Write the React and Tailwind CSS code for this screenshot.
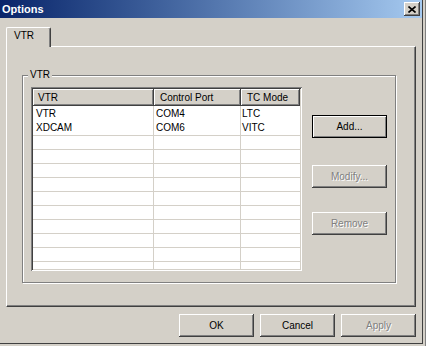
import clsx from "clsx";

const bevel =
  "shadow-[inset_-1px_-1px_#404040,inset_1px_1px_#ffffff,inset_-2px_-2px_#808080,inset_2px_2px_#d4d0c8]";

function Button({ children, disabled, isDefault }) {
  return (
    <div
      className={clsx(
        "flex h-[23px] w-[75px] shrink-0 items-center justify-center bg-[#d4d0c8]",
        isDefault
          ? "border border-black shadow-[inset_1px_1px_#ffffff,inset_-1px_-1px_#808080]"
          : bevel,
        disabled ? "text-[#808080] [text-shadow:1px_1px_0_#ffffff]" : "text-black"
      )}
    >
      {children}
    </div>
  );
}

const rows = [
  { vtr: "VTR", port: "COM4", mode: "LTC" },
  { vtr: "XDCAM", port: "COM6", mode: "VITC" },
];

function VtrList() {
  return (
    <div className="flex h-[184px] w-[271px] shrink-0 flex-col overflow-hidden bg-white p-[2px] shadow-[inset_1px_1px_#808080,inset_-1px_-1px_#ffffff,inset_2px_2px_#404040,inset_-2px_-2px_#d4d0c8]">
      <div className="flex h-[17px] shrink-0 leading-[17px]">
        <div className={clsx("w-[121px] shrink-0 bg-[#d4d0c8] pl-[5px]", bevel)}>VTR</div>
        <div className={clsx("w-[87px] shrink-0 bg-[#d4d0c8] pl-[6px]", bevel)}>Control Port</div>
        <div className={clsx("flex-1 bg-[#d4d0c8] pl-[6px]", bevel)}>TC Mode</div>
      </div>
      <div className="flex min-h-0 flex-1 flex-col overflow-hidden">
        {rows.map((r, i) => (
          <div
            key={r.vtr}
            className={clsx("flex shrink-0", i === 0 ? "h-[15px] leading-[15px]" : "h-[14px] leading-[14px]")}
          >
            <div className="w-[121px] shrink-0 border-r border-[#d4d0c8] pl-[3px]">{r.vtr}</div>
            <div className="w-[87px] shrink-0 border-r border-[#d4d0c8] pl-[2px]">{r.port}</div>
            <div className="flex-1 pl-[1px]">{r.mode}</div>
          </div>
        ))}
        {Array.from({ length: 10 }).map((_, i) => (
          <div key={i} className="flex h-[14px] shrink-0 border-t border-[#d4d0c8]">
            <div className="w-[121px] shrink-0 border-r border-[#d4d0c8]" />
            <div className="w-[87px] shrink-0 border-r border-[#d4d0c8]" />
            <div className="flex-1" />
          </div>
        ))}
      </div>
    </div>
  );
}

export default function App() {
  return (
    <div className="flex h-[346px] w-[426px] overflow-hidden bg-[#d4d0c8] font-['Liberation_Sans',Arial,sans-serif] text-[10px] text-black">
      <div className="flex h-[344px] w-[423px] shrink-0 flex-col border-r border-b border-[#404040]">
        {/* title bar */}
        <div className="flex h-[18px] shrink-0 items-center justify-between bg-linear-to-r from-[#0a246a] to-[#a6caf0] pl-[2px] pr-[2px]">
          <span className="text-[11px] font-bold leading-none text-white">Options</span>
          <div className={clsx("flex h-[14px] w-[16px] items-center justify-center bg-[#d4d0c8]", bevel)}>
            <svg width="8" height="7" viewBox="0 0 8 7">
              <path d="M0.5 0.5 L7.5 6.5 M7.5 0.5 L0.5 6.5" stroke="#000" strokeWidth="1.6" />
            </svg>
          </div>
        </div>

        <div className="flex flex-col pl-[6px] pt-[9px]">
          {/* tab */}
          <div className="relative z-10 -mb-[1px] flex h-[20px] w-[45px] rounded-tl-[2px] rounded-tr-[2px] border-t border-l border-r border-white border-r-[#404040] bg-[#d4d0c8] pl-[7px] pt-[2px] leading-[12px] shadow-[inset_-1px_0_#808080]">
            VTR
          </div>

          {/* tab panel */}
          <div className="h-[261px] w-[410px] border border-white border-r-[#404040] border-b-[#404040] pl-[15px] pt-[28px] shadow-[inset_-1px_-1px_#808080]">
            <div className="relative flex h-[208px] w-[374px] gap-[10px] border border-[#808080] pl-[8px] pt-[11px] shadow-[inset_1px_1px_#ffffff,1px_1px_#ffffff]">
              <span className="absolute left-[5px] top-[-7px] bg-[#d4d0c8] px-[2px] leading-[12px]">VTR</span>
              <VtrList />
              <div className="flex flex-col pt-[28px]">
                <Button isDefault>Add...</Button>
                <div className="mt-[27px]">
                  <Button disabled>Modify...</Button>
                </div>
                <div className="mt-[24px]">
                  <Button disabled>Remove</Button>
                </div>
              </div>
            </div>
          </div>

          {/* dialog buttons */}
          <div className="mt-[7px] flex w-[410px] justify-end gap-[6px]">
            <Button>OK</Button>
            <Button>Cancel</Button>
            <Button disabled>Apply</Button>
          </div>
        </div>
      </div>
      <div className="h-full w-[3px] border-r border-[#808080]" />
    </div>
  );
}
